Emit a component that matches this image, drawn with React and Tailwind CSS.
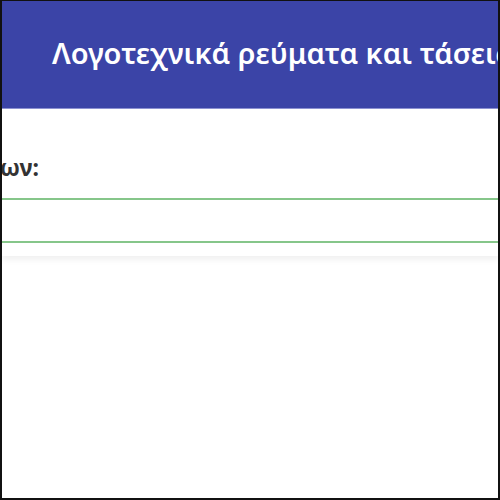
export default function App() {
  return (
    <div className="w-[500px] h-[500px] box-border border-l-2 border-r-2 border-b-2 border-t border-[#111] bg-white overflow-hidden flex flex-col" style={{ fontFamily: '"Noto Sans", "Open Sans", sans-serif' }}>
      <header className="h-[108px] shrink-0 bg-[#3b44a7] border-b border-[#8d92d2] flex items-center pl-[50px] overflow-hidden">
        <h1 className="text-white text-[29px] font-semibold whitespace-nowrap leading-none -mt-[5px]">
          Λογοτεχνικά ρεύματα και τάσεις
        </h1>
      </header>
      <div className="flex flex-col shadow-[0_4px_6px_rgba(0,0,0,0.06)] pb-[13px]">
        <div className="h-[89px] flex items-end pb-[19px] overflow-hidden">
          <span className="text-[23px] font-bold text-[#333] leading-none whitespace-nowrap -ml-[2px]">ων:</span>
        </div>
        <div className="h-[45px] border-y-2 border-[#86c68a]"></div>
      </div>
      <div className="flex-1"></div>
    </div>
  );
}
